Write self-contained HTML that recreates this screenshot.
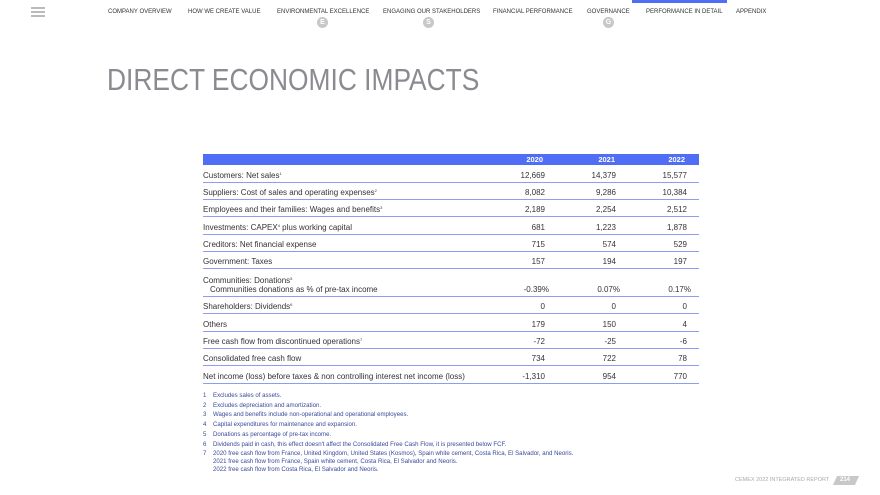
<!DOCTYPE html>
<html><head><meta charset="utf-8"><style>
*{margin:0;padding:0;box-sizing:border-box}
body{width:880px;height:495px;background:#fff;font-family:"Liberation Sans",sans-serif;position:relative;overflow:hidden;color:#3a3a4a}
.nav{position:absolute;top:9px;font-size:6px;color:#333;white-space:nowrap}
.circ{position:absolute;top:17px;width:11px;height:11px;border-radius:50%;background:#c8c8c8;color:#fff;font-size:7px;text-align:center;line-height:11px;font-weight:bold}
h1{position:absolute;left:107px;top:62px;font-size:31px;font-weight:normal;color:#8a8a90;transform:scaleX(0.85);transform-origin:0 0;white-space:nowrap}
.hdr{position:absolute;left:203px;top:154px;width:496px;height:11px;background:#4f6ef5}
.hdr span{position:absolute;top:0;color:#fff;font-weight:bold;font-size:7.5px;line-height:11px}
.row{position:absolute;left:203px;width:496px;border-bottom:1px solid #8c9ef2;font-size:8px;color:#333}
.row span{position:absolute;bottom:2px}
.c1{right:154px}.c2{right:83px}.c3{right:12px}
sup{font-size:4px;vertical-align:top}
.fn{position:absolute;left:203px;font-size:6.1px;color:#3a4a9a;line-height:8px}
.fn b{font-weight:normal;display:inline-block;width:10px}
</style></head><body>
<div style="position:absolute;left:31px;top:7px;width:14px;height:2px;background:#bbb"></div>
<div style="position:absolute;left:31px;top:11px;width:14px;height:2px;background:#bbb"></div>
<div style="position:absolute;left:31px;top:15px;width:14px;height:2px;background:#bbb"></div>
<div class="nav" style="left:108px">COMPANY OVERVIEW</div>
<div class="nav" style="left:188px">HOW WE CREATE VALUE</div>
<div class="nav" style="left:277px">ENVIRONMENTAL EXCELLENCE</div>
<div class="nav" style="left:383px">ENGAGING OUR STAKEHOLDERS</div>
<div class="nav" style="left:493px">FINANCIAL PERFORMANCE</div>
<div class="nav" style="left:587px">GOVERNANCE</div>
<div class="nav" style="left:646px">PERFORMANCE IN DETAIL</div>
<div class="nav" style="left:736px">APPENDIX</div>
<div style="position:absolute;left:632px;top:0;width:95px;height:3px;background:#4f6ef5"></div>
<div class="circ" style="left:317px">E</div>
<div class="circ" style="left:423px">S</div>
<div class="circ" style="left:603px">G</div>
<h1>DIRECT ECONOMIC IMPACTS</h1>
<div class="hdr"><span style="right:156px">2020</span><span style="right:84px">2021</span><span style="right:14px">2022</span></div>
<div class="row" style="top:166px;height:17px"><span style="left:0">Customers: Net sales<sup>1</sup></span><span class="c1">12,669</span><span class="c2">14,379</span><span class="c3">15,577</span></div>
<div class="row" style="top:183px;height:17px"><span style="left:0">Suppliers: Cost of sales and operating expenses<sup>2</sup></span><span class="c1">8,082</span><span class="c2">9,286</span><span class="c3">10,384</span></div>
<div class="row" style="top:200px;height:17px"><span style="left:0">Employees and their families: Wages and benefits<sup>3</sup></span><span class="c1">2,189</span><span class="c2">2,254</span><span class="c3">2,512</span></div>
<div class="row" style="top:217px;height:18px"><span style="left:0">Investments: CAPEX<sup>4</sup> plus working capital</span><span class="c1">681</span><span class="c2">1,223</span><span class="c3">1,878</span></div>
<div class="row" style="top:235px;height:17px"><span style="left:0">Creditors: Net financial expense</span><span class="c1">715</span><span class="c2">574</span><span class="c3">529</span></div>
<div class="row" style="top:252px;height:17px"><span style="left:0">Government: Taxes</span><span class="c1">157</span><span class="c2">194</span><span class="c3">197</span></div>
<div class="row" style="top:269px;height:28px"><span style="left:0;bottom:11px">Communities: Donations<sup>5</sup></span><span style="left:7px">Communities donations as % of pre-tax income</span><span style="right:150px">-0.39%</span><span style="right:79px">0.07%</span><span style="right:8px">0.17%</span></div>
<div class="row" style="top:297px;height:17px"><span style="left:0">Shareholders: Dividends<sup>6</sup></span><span class="c1">0</span><span class="c2">0</span><span class="c3">0</span></div>
<div class="row" style="top:314px;height:18px"><span style="left:0">Others</span><span class="c1">179</span><span class="c2">150</span><span class="c3">4</span></div>
<div class="row" style="top:332px;height:17px"><span style="left:0">Free cash flow from discontinued operations<sup>7</sup></span><span class="c1">-72</span><span class="c2">-25</span><span class="c3">-6</span></div>
<div class="row" style="top:349px;height:17px"><span style="left:0">Consolidated free cash flow</span><span class="c1">734</span><span class="c2">722</span><span class="c3">78</span></div>
<div class="row" style="top:366px;height:18px"><span style="left:0">Net income (loss) before taxes &amp; non controlling interest net income (loss)</span><span class="c1">-1,310</span><span class="c2">954</span><span class="c3">770</span></div>
<div class="fn" style="top:391px;line-height:9.7px">
<div><b>1</b>Excludes sales of assets.</div>
<div><b>2</b>Excludes depreciation and amortization.</div>
<div><b>3</b>Wages and benefits include non-operational and operational employees.</div>
<div><b>4</b>Capital expenditures for maintenance and expansion.</div>
<div><b>5</b>Donations as percentage of pre-tax income.</div>
<div><b>6</b>Dividends paid in cash, this effect doesn't affect the Consolidated Free Cash Flow, it is presented below FCF.</div>
<div style="line-height:8px;margin-top:1px"><b>7</b>2020 free cash flow from France, United Kingdom, United States (Kosmos), Spain white cement, Costa Rica, El Salvador, and Neoris.<br><b></b>2021 free cash flow from France, Spain white cement, Costa Rica, El Salvador and Neoris.<br><b></b>2022 free cash flow from Costa Rica, El Salvador and Neoris.</div>
</div>
<div style="position:absolute;left:735px;top:477px;font-size:5.5px;color:#aaa">CEMEX 2022 INTEGRATED REPORT</div>
<div style="position:absolute;left:835px;top:476px;width:22px;height:9px;background:#c8c8c8;transform:skewX(-25deg)"></div>
<div style="position:absolute;left:840px;top:477px;font-size:6px;color:#fff;font-weight:bold">214</div>
</body></html>
